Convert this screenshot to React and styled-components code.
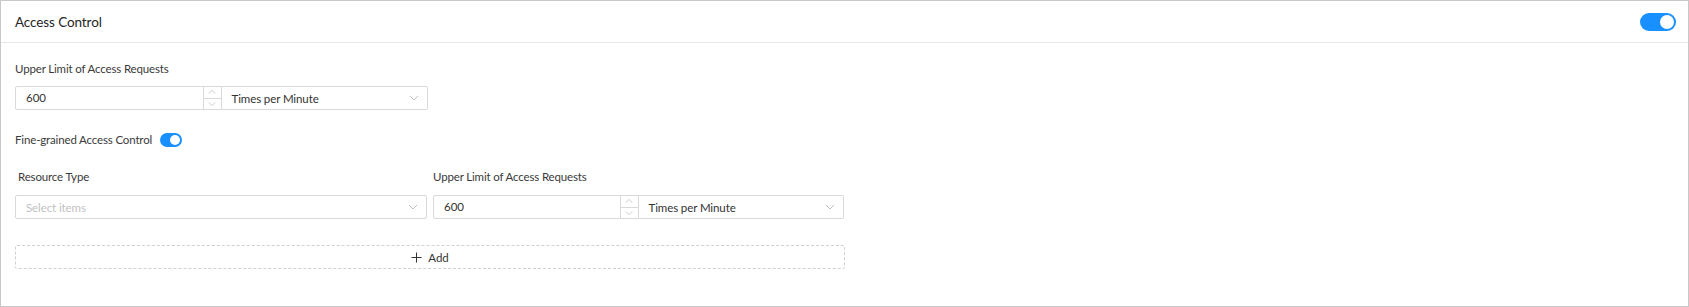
import React from "react";
import styled, { createGlobalStyle } from "styled-components";

const GlobalStyle = createGlobalStyle`
  html, body {
    margin: 0;
    padding: 0;
    background: #fff;
  }
  body {
    font-family: Lato, "Noto Sans", Arial, sans-serif;
    color: #333;
  }
  * {
    box-sizing: border-box;
  }
`;

function Chevron({ dir = "down", size = 10 }) {
  const points = dir === "down" ? "1,3 5,7 9,3" : "1,7 5,3 9,7";
  return (
    <svg width={size} height={size} viewBox="0 0 10 10">
      <polyline points={points} fill="none" stroke="#bfbfbf" strokeWidth="1" />
    </svg>
  );
}

function Switch({ small }) {
  return (
    <SwitchTrack $small={small}>
      <SwitchKnob $small={small} />
    </SwitchTrack>
  );
}

function NumberWithUnit({ value }) {
  return (
    <Group>
      <NumberBox>
        <NumberValue>{value}</NumberValue>
        <Spinner>
          <SpinButton>
            <Chevron dir="up" size={8} />
          </SpinButton>
          <SpinButton $bottom>
            <Chevron dir="down" size={8} />
          </SpinButton>
        </Spinner>
      </NumberBox>
      <SelectBox $joined>
        <SelectValue>Times per Minute</SelectValue>
        <Chevron />
      </SelectBox>
    </Group>
  );
}

export default function App() {
  return (
    <>
      <GlobalStyle />
      <Card>
        <Header>
          <Title>Access Control</Title>
          <Switch />
        </Header>
        <Body>
          <Label>Upper Limit of Access Requests</Label>
          <FirstGroup>
            <NumberWithUnit value="600" />
          </FirstGroup>

          <InlineRow>
            <Label>Fine-grained Access Control</Label>
            <Switch small />
          </InlineRow>

          <Grid>
            <ColLabel $indent>Resource Type</ColLabel>
            <ColLabel>Upper Limit of Access Requests</ColLabel>
            <SelectBox>
              <SelectValue $placeholder>Select items</SelectValue>
              <Chevron />
            </SelectBox>
            <NumberWithUnit value="600" />
          </Grid>

          <AddButton>
            <svg width="11" height="11" viewBox="0 0 11 11">
              <path d="M5.5 0.5v10M0.5 5.5h10" stroke="#333" strokeWidth="1" fill="none" />
            </svg>
            <span>Add</span>
          </AddButton>
        </Body>
      </Card>
    </>
  );
}

const Card = styled.div`
  width: 1689px;
  height: 307px;
  border: 1px solid #c8c8c8;
  background: #fff;
  display: flex;
  flex-direction: column;
`;

const Header = styled.div`
  height: 42px;
  flex: none;
  display: flex;
  align-items: center;
  justify-content: space-between;
  padding: 0 12px 0 14px;
  border-bottom: 1px solid #e8e8e8;
`;

const Title = styled.div`
  font-size: 13.5px;
  letter-spacing: -0.1px;
  color: #262626;
`;

const SwitchTrack = styled.span`
  display: inline-flex;
  align-items: center;
  justify-content: flex-end;
  width: ${(p) => (p.$small ? "22px" : "36px")};
  height: ${(p) => (p.$small ? "14px" : "18px")};
  padding: 2px;
  border-radius: 10px;
  background: #1890ff;
`;

const SwitchKnob = styled.span`
  width: ${(p) => (p.$small ? "10px" : "14px")};
  height: ${(p) => (p.$small ? "10px" : "14px")};
  border-radius: 50%;
  background: #fff;
`;

const Body = styled.div`
  padding: 16px 14px 0 14px;
  display: flex;
  flex-direction: column;
`;

const Label = styled.div`
  font-size: 11.5px;
  letter-spacing: -0.15px;
  line-height: 20px;
  color: #3a3a3a;
`;

const FirstGroup = styled.div`
  margin-top: 7px;
  width: 413px;
`;

const Group = styled.div`
  display: flex;
  height: 24px;
`;

const NumberBox = styled.div`
  flex: none;
  width: 50%;
  display: flex;
  border: 1px solid #d9d9d9;
  border-radius: 2px 0 0 2px;
`;

const NumberValue = styled.div`
  flex: 1;
  font-size: 11.5px;
  line-height: 22px;
  padding-left: 10px;
  color: #333;
`;

const Spinner = styled.div`
  width: 18px;
  display: flex;
  flex-direction: column;
  border-left: 1px solid #d9d9d9;
`;

const SpinButton = styled.div`
  flex: 1;
  display: flex;
  align-items: center;
  justify-content: center;
  border-top: ${(p) => (p.$bottom ? "1px solid #d9d9d9" : "none")};
`;

const SelectBox = styled.div`
  flex: 1;
  min-width: 0;
  height: 24px;
  display: flex;
  align-items: center;
  justify-content: space-between;
  padding: 0 8px 0 10px;
  border: 1px solid #d9d9d9;
  border-left: ${(p) => (p.$joined ? "none" : "1px solid #d9d9d9")};
  border-radius: ${(p) => (p.$joined ? "0 2px 2px 0" : "2px")};
`;

const SelectValue = styled.span`
  font-size: 11.5px;
  letter-spacing: -0.1px;
  color: ${(p) => (p.$placeholder ? "#bfbfbf" : "#333")};
`;

const InlineRow = styled.div`
  margin-top: 20px;
  display: flex;
  align-items: center;
  gap: 8px;
`;

const Grid = styled.div`
  margin-top: 17px;
  display: grid;
  grid-template-columns: 412px 411px;
  column-gap: 6px;
  row-gap: 8px;
`;

const ColLabel = styled(Label)`
  padding-left: ${(p) => (p.$indent ? "3px" : "0")};
`;

const AddButton = styled.div`
  margin-top: 26px;
  width: 830px;
  height: 24px;
  display: flex;
  align-items: center;
  justify-content: center;
  gap: 6px;
  border: 1px dashed #d0d0d0;
  border-radius: 2px;
  font-size: 11.5px;
  color: #333;
`;
